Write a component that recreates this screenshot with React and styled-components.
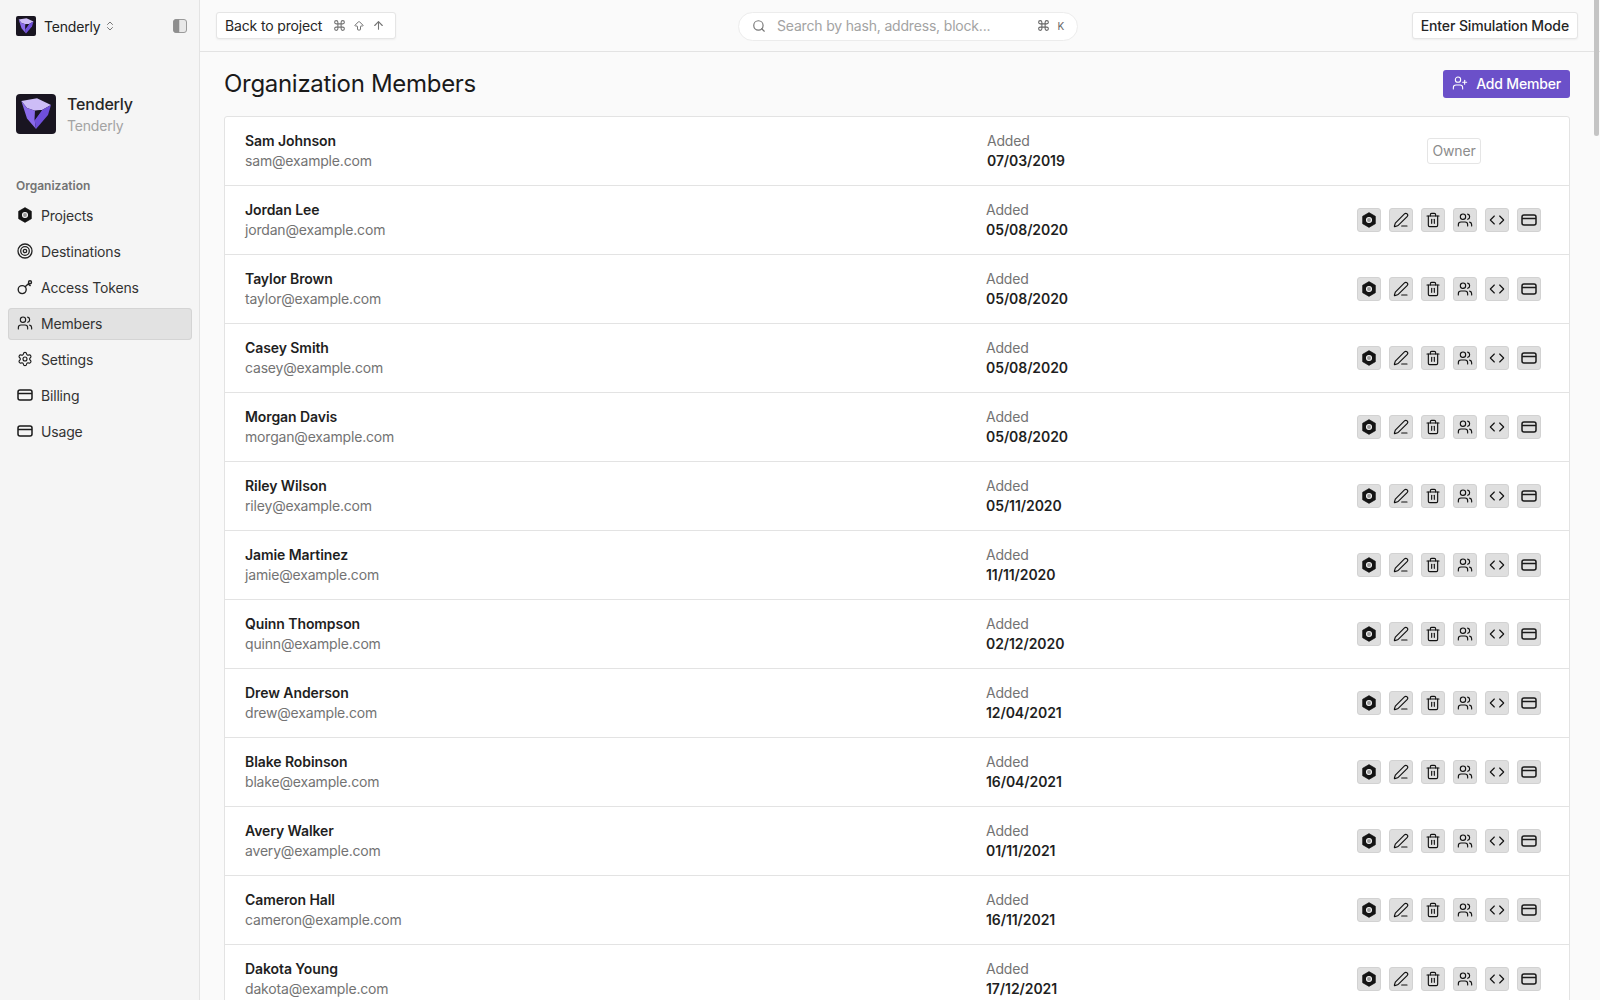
import React from 'react'
import styled, { createGlobalStyle } from 'styled-components'
import { Search, ChevronsUpDown, Command, ArrowBigUp, ArrowUp, Users, UserPlus, Settings, PenLine, Trash2, Code } from 'lucide-react'

const GlobalStyle = createGlobalStyle`
  html, body {
    margin: 0;
    height: 100%;
    overflow: hidden;
    background: #fafafa;
    font-family: Inter, "Liberation Sans", sans-serif;
    letter-spacing: -0.18px;
    color: #1a1a1a;
  }
  * { box-sizing: border-box; }
`

const Shell = styled.div`
  display: flex;
  height: 100vh;
  position: relative;
`
const Sidebar = styled.aside`
  width: 200px;
  flex-shrink: 0;
  background: #f5f5f5;
  border-right: 1px solid #e3e3e3;
  padding: 0 7px 0 8px;
`
const SideTop = styled.div`
  height: 52px;
  display: flex;
  align-items: center;
  padding: 0 8px;
  font-size: 14px;
  color: #222;
  svg.chev { margin-left: 3px; color: #777; }
`
const BrandName = styled.span`
  margin-left: 8px;
`
const PanelToggle = styled.svg`
  margin-left: auto;
  margin-right: -3px;
`
const OrgCard = styled.div`
  display: flex;
  align-items: center;
  gap: 11px;
  padding: 0 8px;
  margin-top: 39px;
`
const OrgText = styled.div`
  padding-top: 2px;
`
const OrgName = styled.div`
  font-size: 16px;
  line-height: 22px;
  font-weight: 500;
  color: #262626;
`
const OrgSub = styled.div`
  font-size: 14px;
  line-height: 22px;
  color: #a3a3a3;
`
const SideLabel = styled.div`
  font-size: 12px;
  font-weight: 600;
  line-height: 16px;
  letter-spacing: 0;
  color: #737373;
  padding: 0 8px;
  margin-top: 41px;
  margin-bottom: 6px;
`
const NavItem = styled.div`
  height: 32px;
  margin-bottom: 4px;
  display: flex;
  align-items: center;
  gap: 8px;
  padding: 0 9px 2px;
  border-radius: 4px;
  font-size: 14px;
  color: #333;
  background: ${p => (p.$active ? '#e2e2e2' : 'transparent')};
  box-shadow: ${p => (p.$active ? 'inset 0 0 0 1px #d4d4d4' : 'none')};
`
const Main = styled.main`
  flex: 1;
  min-width: 0;
`
const TopBar = styled.header`
  height: 52px;
  display: flex;
  align-items: center;
  justify-content: space-between;
  padding: 0 22px 0 16px;
  border-bottom: 1px solid #e3e3e3;
  position: relative;
`
const ToolButton = styled.div`
  height: 27px;
  display: flex;
  align-items: center;
  padding: 0 8px;
  background: #fff;
  border: 1px solid #e5e5e5;
  border-radius: 3px;
  box-shadow: 0 1px 2px rgba(0, 0, 0, 0.05);
  font-size: 14px;
  font-weight: ${p => (p.$strong ? 500 : 400)};
  letter-spacing: ${p => (p.$strong ? '-0.12px' : '-0.15px')};
  color: #262626;
`
const Keys = styled.span`
  display: flex;
  align-items: center;
  gap: 7px;
  margin: 0 2px 0 11px;
  color: #737373;
`
const SearchBox = styled.div`
  width: 340px;
  height: 29px;
  display: flex;
  align-items: center;
  padding: 0 13px 2px;
  border-radius: 15px;
  background: #fff;
  border: 1px solid #ececec;
  font-size: 14px;
  color: #a3a3a3;
  position: absolute;
  left: 538px;
  top: 12px;
`
const SearchText = styled.span`
  margin-left: 11px;
  flex: 1;
`
const SearchKeys = styled.span`
  display: flex;
  align-items: center;
  gap: 7px;
  color: #666;
  font-size: 10px;
`
const Content = styled.div`
  padding: 18px 30px 0 24px;
`
const TitleRow = styled.div`
  display: flex;
  align-items: center;
  justify-content: space-between;
  height: 28px;
  margin-bottom: 18px;
`
const Title = styled.h1`
  margin: 0 0 2px;
  font-size: 24px;
  font-weight: 400;
  letter-spacing: -0.3px;
  color: #1a1a1a;
`
const AddButton = styled.div`
  height: 28px;
  display: flex;
  align-items: center;
  gap: 8px;
  padding: 0 9px 2px;
  background: #6b50c9;
  border-radius: 3px;
  color: #fff;
  font-size: 14px;
  font-weight: 500;
`
const Table = styled.div`
  background: #fff;
  border: 1px solid #e3e3e3;
  border-radius: 3px;
`
const Row = styled.div`
  height: 69px;
  display: flex;
  align-items: center;
  padding: 0 28px 0 20px;
  border-bottom: 1px solid #e3e3e3;
  font-size: 14px;
  line-height: 20px;
`
const Person = styled.div`
  width: ${p => (p.$owner ? '742px' : '741px')};
  flex-shrink: 0;
`
const Strong = styled.div`
  font-weight: 600;
  letter-spacing: -0.08px;
  color: #1f1f1f;
`
const Muted = styled.div`
  color: #737373;
`
const DateCell = styled.div`
  flex: 1;
`
const OwnerBadge = styled.div`
  width: 54px;
  height: 26px;
  margin-right: 60px;
  border: 1px solid #e5e5e5;
  border-radius: 3px;
  display: flex;
  align-items: center;
  justify-content: center;
  color: #8c8c8c;
`
const Actions = styled.div`
  display: flex;
  gap: 8px;
`
const ActionButton = styled.div`
  width: 24px;
  height: 24px;
  display: flex;
  align-items: center;
  justify-content: center;
  background: #dfdfdf;
  border: 1px solid #d2d2d2;
  border-radius: 3px;
  color: #111;
`
const ScrollThumb = styled.div`
  position: absolute;
  top: 0;
  right: 1px;
  width: 5px;
  height: 136px;
  background: #c4c4c4;
  border-radius: 0 0 3px 3px;
`

const Logo = ({ size }) => (
  <svg width={size} height={size} viewBox="0 0 40 40" style={{ flexShrink: 0 }}>
    <rect width="40" height="40" rx="4" fill="#191521" />
    <path d="M5.300 7 L21 4.300 L35 11 L26 16 L19 16.700 L11 14 Z" fill="#cdbdf7" />
    <path d="M5.300 7 L11 14 L19 16.700 L18.700 26 L20 35 L11 24.500 Z" fill="#8a6bea" />
    <path d="M35 11 L32 21 L20 35 L18.700 26 L26 16 Z" fill="#6f4fdb" />
    <path d="M19 16.700 L26 16 L18.700 26 Z" fill="#191521" />
  </svg>
)
const HexIcon = ({ size = 16 }) => (
  <svg width={size} height={size} viewBox="0 0 16 16" style={{ flexShrink: 0 }}>
    <path
      fill="#141414"
      stroke="#141414"
      strokeWidth="0.6"
      strokeLinejoin="round"
      d="M8 .6l6.400 3.700v7.400L8 15.400l-6.400-3.700V4.300z"
    />
    <circle cx="8" cy="8" r="2.500" fill="#9a9a9a" stroke="#f0f0f0" strokeWidth="1.100" />
  </svg>
)
const TargetIcon = () => (
  <svg width="16" height="16" viewBox="0 0 16 16" fill="none" stroke="#222" strokeWidth="1.3">
    <circle cx="8" cy="8" r="7" />
    <circle cx="8" cy="8" r="4.300" />
    <circle cx="8" cy="8" r="1.700" />
  </svg>
)
const KeyIcon = () => (
  <svg width="16" height="16" viewBox="0 0 16 16" fill="none" stroke="#222" strokeWidth="1.4" strokeLinecap="round">
    <circle cx="5.200" cy="10.600" r="4" />
    <path d="M8.200 7.800l3.400-3.200M11.200 5l2 1.600" />
    <circle cx="13" cy="3.200" r="1.500" />
  </svg>
)
const CardIcon = ({ size = 16 }) => (
  <svg width={size} height={size} viewBox="0 0 16 16" fill="none" stroke="#1a1a1a" strokeWidth="1.5" style={{ flexShrink: 0 }}>
    <rect x="1" y="3" width="14" height="10" rx="2" />
    <path d="M1 6.500h14" />
  </svg>
)

const members = [
  ['Jordan Lee', 'jordan@example.com', '05/08/2020'],
  ['Taylor Brown', 'taylor@example.com', '05/08/2020'],
  ['Casey Smith', 'casey@example.com', '05/08/2020'],
  ['Morgan Davis', 'morgan@example.com', '05/08/2020'],
  ['Riley Wilson', 'riley@example.com', '05/11/2020'],
  ['Jamie Martinez', 'jamie@example.com', '11/11/2020'],
  ['Quinn Thompson', 'quinn@example.com', '02/12/2020'],
  ['Drew Anderson', 'drew@example.com', '12/04/2021'],
  ['Blake Robinson', 'blake@example.com', '16/04/2021'],
  ['Avery Walker', 'avery@example.com', '01/11/2021'],
  ['Cameron Hall', 'cameron@example.com', '16/11/2021'],
  ['Dakota Young', 'dakota@example.com', '17/12/2021'],
]

const navItems = [
  ['Projects', <HexIcon />],
  ['Destinations', <TargetIcon />],
  ['Access Tokens', <KeyIcon />],
  ['Members', <Users size={16} strokeWidth={1.7} color="#1a1a1a" />],
  ['Settings', <Settings size={16} strokeWidth={1.7} color="#1a1a1a" />],
  ['Billing', <CardIcon />],
  ['Usage', <CardIcon />],
]

export default function App() {
  return (
    <>
      <GlobalStyle />
      <Shell>
        <Sidebar>
          <SideTop>
            <Logo size={20} />
            <BrandName>Tenderly</BrandName>
            <ChevronsUpDown className="chev" size={12} />
            <PanelToggle width="14" height="14" viewBox="0 0 14 14">
              <rect x="0.5" y="0.5" width="13" height="13" rx="2.500" fill="#e8e8e8" stroke="#9a9a9a" />
              <path d="M3 .5h3v13H3a2.500 2.500 0 0 1-2.500-2.500V3A2.500 2.500 0 0 1 3 .5z" fill="#8f8f8f" stroke="#8f8f8f" strokeWidth="0.5" />
            </PanelToggle>
          </SideTop>
          <OrgCard>
            <Logo size={40} />
            <OrgText>
              <OrgName>Tenderly</OrgName>
              <OrgSub>Tenderly</OrgSub>
            </OrgText>
          </OrgCard>
          <SideLabel>Organization</SideLabel>
          {navItems.map(([label, icon]) => (
            <NavItem key={label} $active={label === 'Members'}>
              {icon}
              {label}
            </NavItem>
          ))}
        </Sidebar>
        <Main>
          <TopBar>
            <ToolButton>
              Back to project
              <Keys>
                <Command size={13} />
                <ArrowBigUp size={12} />
                <ArrowUp size={13} />
              </Keys>
            </ToolButton>
            <SearchBox>
              <Search size={14} color="#777" />
              <SearchText>Search by hash, address, block...</SearchText>
              <SearchKeys>
                <Command size={13} />K
              </SearchKeys>
            </SearchBox>
            <ToolButton $strong>Enter Simulation Mode</ToolButton>
          </TopBar>
          <Content>
            <TitleRow>
              <Title>Organization Members</Title>
              <AddButton>
                <UserPlus size={16} strokeWidth={1.6} />
                Add Member
              </AddButton>
            </TitleRow>
            <Table>
              <Row>
                <Person $owner>
                  <Strong>Sam Johnson</Strong>
                  <Muted>sam@example.com</Muted>
                </Person>
                <DateCell>
                  <Muted>Added</Muted>
                  <Strong>07/03/2019</Strong>
                </DateCell>
                <OwnerBadge>Owner</OwnerBadge>
              </Row>
              {members.map(([name, email, date]) => (
                <Row key={email}>
                  <Person>
                    <Strong>{name}</Strong>
                    <Muted>{email}</Muted>
                  </Person>
                  <DateCell>
                    <Muted>Added</Muted>
                    <Strong>{date}</Strong>
                  </DateCell>
                  <Actions>
                    <ActionButton><HexIcon /></ActionButton>
                    <ActionButton><PenLine size={16} strokeWidth={1.7} /></ActionButton>
                    <ActionButton><Trash2 size={16} strokeWidth={1.7} /></ActionButton>
                    <ActionButton><Users size={16} strokeWidth={1.7} /></ActionButton>
                    <ActionButton><Code size={16} strokeWidth={1.7} /></ActionButton>
                    <ActionButton><CardIcon /></ActionButton>
                  </Actions>
                </Row>
              ))}
            </Table>
          </Content>
        </Main>
        <ScrollThumb />
      </Shell>
    </>
  )
}
